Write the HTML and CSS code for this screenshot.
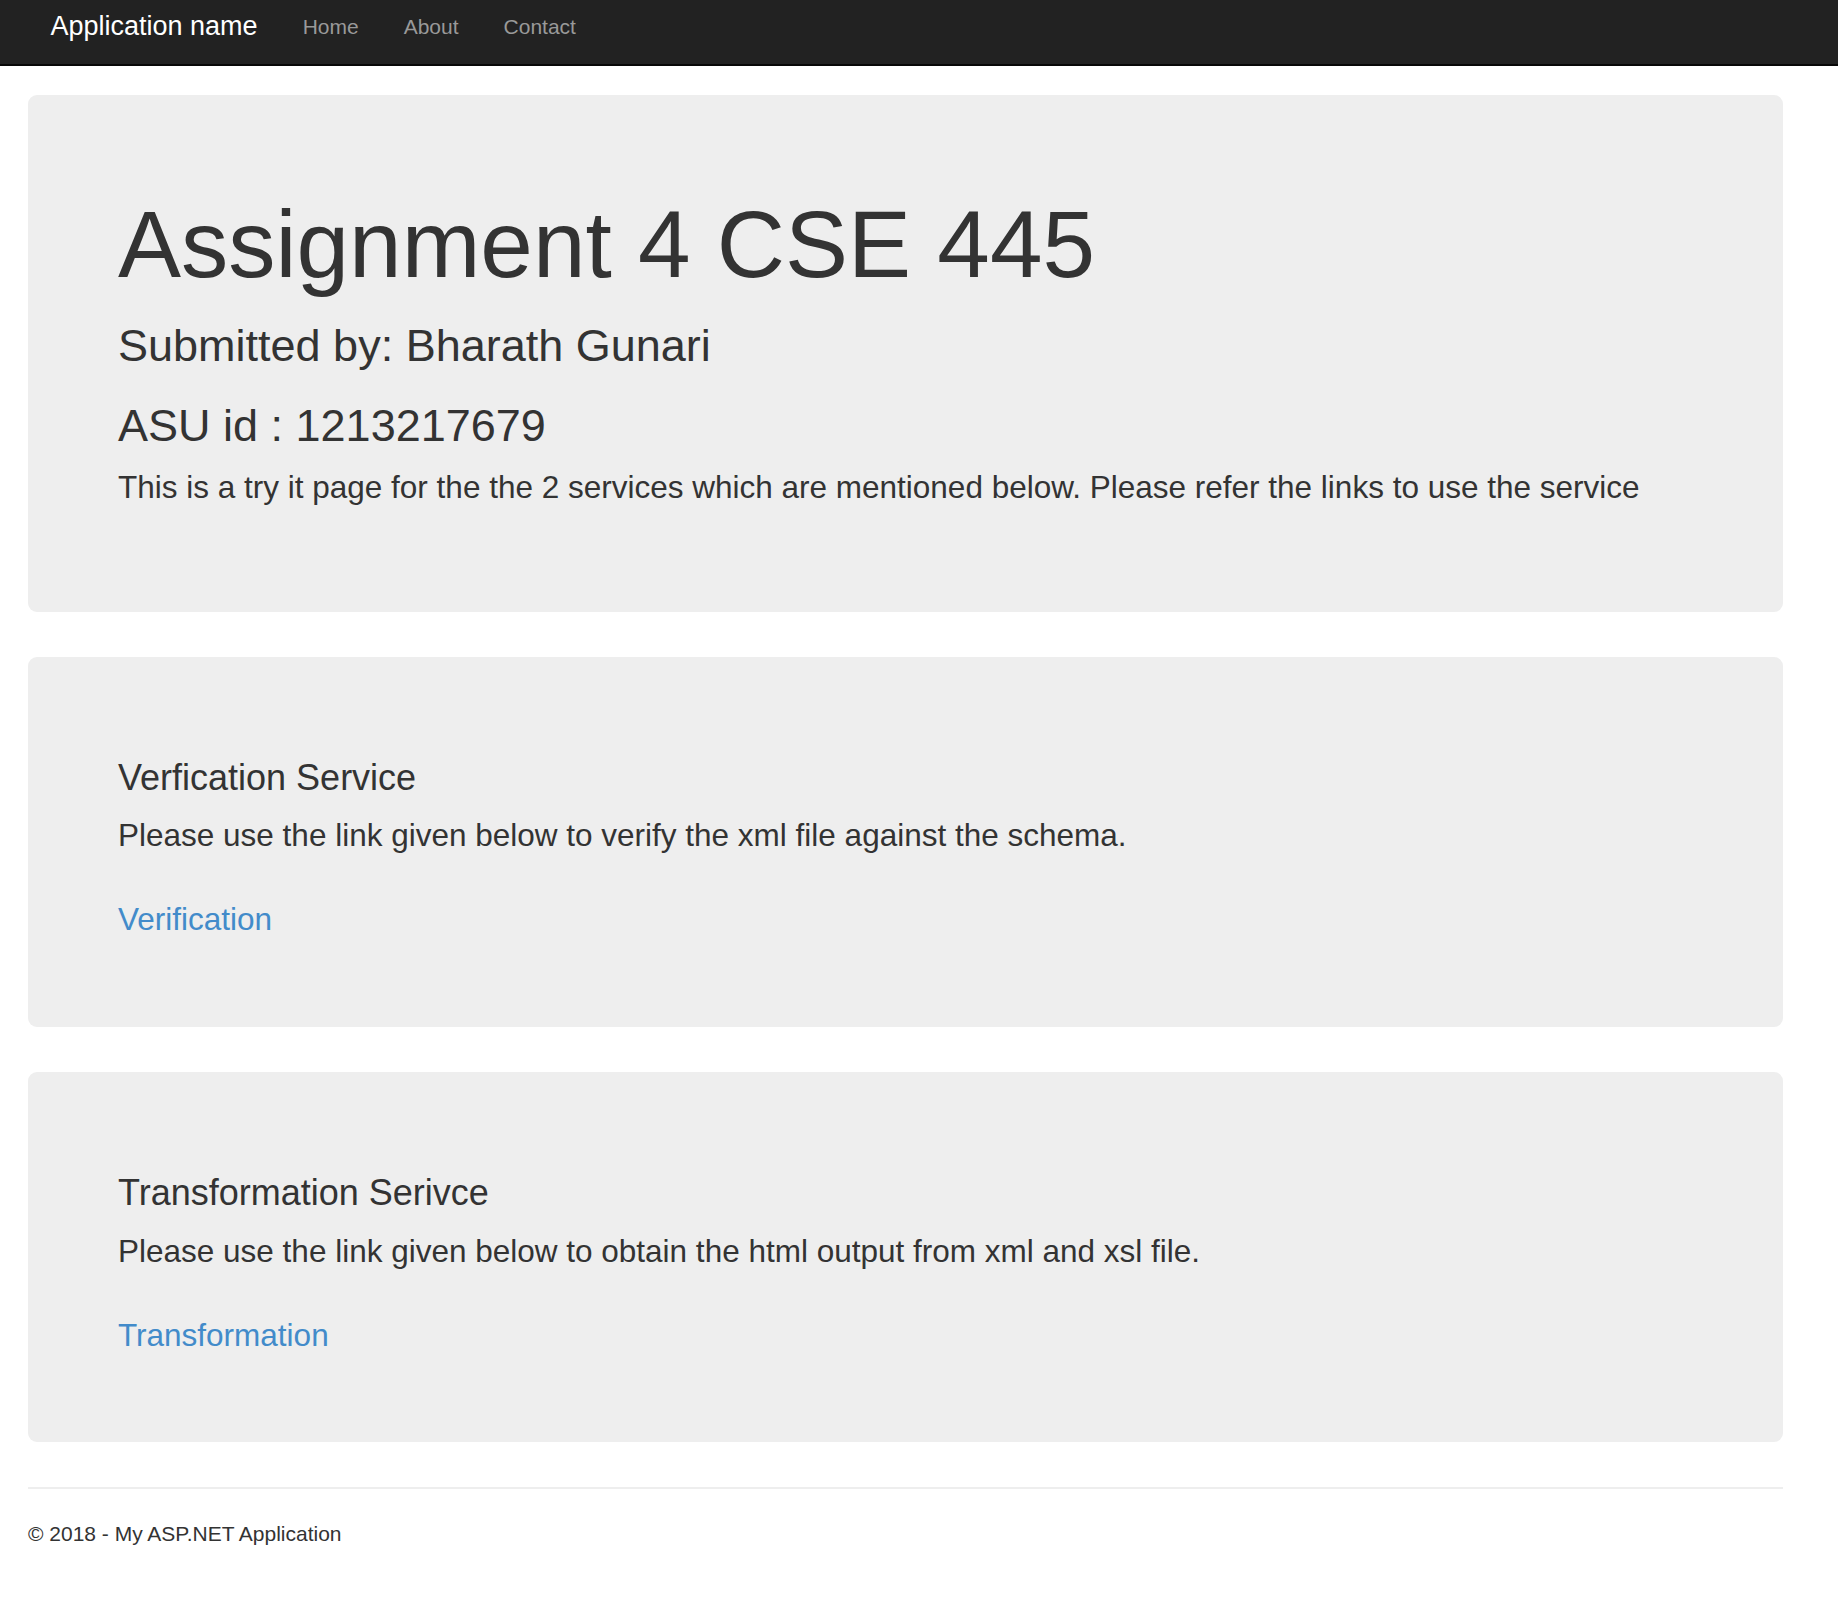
FILE: index.html
```html
<!DOCTYPE html>
<html lang="en">
<head>
<meta charset="utf-8">
<title>Home Page - My ASP.NET Application</title>
<link rel="stylesheet" href="styles.css">
</head>
<body>
<nav class="navbar">
  <div class="navbar-inner">
    <a class="brand" href="#">Application name</a>
    <ul class="nav">
      <li><a href="#">Home</a></li>
      <li><a href="#">About</a></li>
      <li><a href="#">Contact</a></li>
    </ul>
  </div>
</nav>
<main class="body-content">
  <section class="jumbotron intro">
    <h1>Assignment 4 CSE 445</h1>
    <h2 class="sub sub-first">Submitted by: Bharath Gunari</h2>
    <h2 class="sub">ASU id : 1213217679</h2>
    <p class="lead">This is a try it page for the the 2 services which are mentioned below. Please refer the links to use the service</p>
  </section>
  <section class="jumbotron service">
    <h3>Verfication Service</h3>
    <p class="desc">Please use the link given below to verify the xml file against the schema.</p>
    <p class="link"><a href="#">Verification</a></p>
  </section>
  <section class="jumbotron service">
    <h3>Transformation Serivce</h3>
    <p class="desc">Please use the link given below to obtain the html output from xml and xsl file.</p>
    <p class="link"><a href="#">Transformation</a></p>
  </section>
  <footer class="footer">
    <hr class="rule">
    <p class="copy">&copy; 2018 - My ASP.NET Application</p>
  </footer>
</main>
</body>
</html>
```

FILE: styles.css
```css
html, body {
  margin: 0;
  padding: 0;
}

body {
  font-family: "Liberation Sans", Arial, Helvetica, sans-serif;
  font-size: 21px;
  line-height: 30px;
  color: #333;
  background: #fff;
}

a {
  color: #428bca;
  text-decoration: none;
}

/* Navbar */
.navbar {
  background: #222;
  border-bottom: 2px solid #080808;
  height: 64px;
  margin-bottom: 29px;
}

.navbar-inner {
  width: 1755px;
  margin-left: 28px;
  display: flex;
  align-items: flex-start;
}

.brand {
  display: block;
  padding: 11px 22.5px 0;
  font-size: 27px;
  line-height: 30px;
  color: #fff;
}

.nav {
  list-style: none;
  margin: 0;
  padding: 0;
  display: flex;
}

.nav a {
  display: block;
  padding: 12px 22.5px 0;
  font-size: 21px;
  line-height: 30px;
  color: #999;
}

/* Content */
.body-content {
  width: 1755px;
  margin-left: 28px;
  padding-bottom: 30px;
}

.jumbotron {
  background: #eee;
  border-radius: 9px;
  padding: 72px 90px;
  margin-bottom: 45px;
}

.intro h1 {
  margin: 25px 0 0;
  font-size: 94.5px;
  line-height: 104px;
  font-weight: normal;
}

.intro .sub {
  margin: 30px 0 0;
  font-size: 45px;
  line-height: 49.5px;
  font-weight: normal;
}

.intro .sub-first {
  margin-top: 25px;
}

.intro .lead {
  margin: 15px 0 30.6px;
  font-size: 31.5px;
  line-height: 44.1px;
}

.service h3 {
  margin: 29px 0 16px;
  font-size: 36px;
  line-height: 39.6px;
  font-weight: normal;
}

.service .desc {
  margin: 0;
  font-size: 31.5px;
  line-height: 44.1px;
}

.service .link {
  margin: 40px 0 13.5px;
  font-size: 31.5px;
  line-height: 44.1px;
}

/* Footer */
.rule {
  margin: 0 0 30px;
  border: 0;
  border-top: 2px solid #eee;
  height: 0;
}

.copy {
  margin: 0;
  font-size: 21px;
  line-height: 30px;
}
```
